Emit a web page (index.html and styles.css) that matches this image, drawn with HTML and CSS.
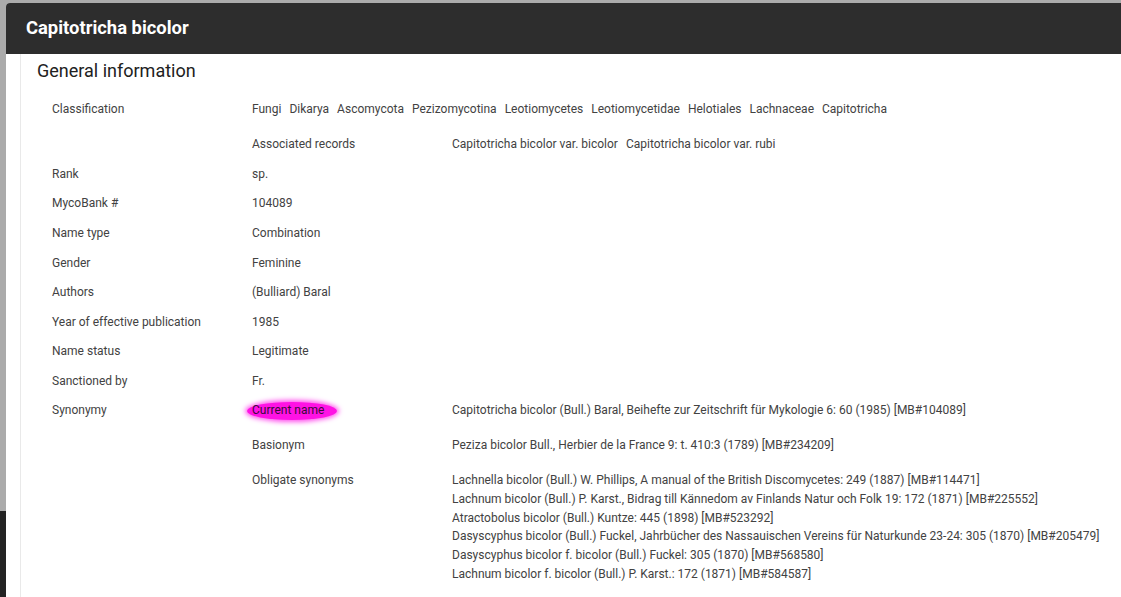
FILE: index.html
```html
<!DOCTYPE html>
<html lang="en">
<head>
  <meta charset="UTF-8">
  <meta name="viewport" content="width=device-width, initial-scale=1.0">
  <title>Capitotricha bicolor</title>
  <link rel="stylesheet" href="styles.css">
</head>
<body>
  <div class="dialog">
    <!-- Dialog header -->
    <div class="dialog-header">Capitotricha bicolor</div>

    <div class="dialog-body">
      <h2 class="section-title">General information</h2>

      <div class="info-table">
        <div class="row">
          <div class="label">Classification</div>
          <div class="value">
            <div class="chips">
              <span>Fungi</span><span>Dikarya</span><span>Ascomycota</span><span>Pezizomycotina</span><span>Leotiomycetes</span><span>Leotiomycetidae</span><span>Helotiales</span><span>Lachnaceae</span><span>Capitotricha</span>
            </div>
            <div class="sub-row">
              <div class="label">Associated records</div>
              <div class="chips">
                <span>Capitotricha bicolor var. bicolor</span><span>Capitotricha bicolor var. rubi</span>
              </div>
            </div>
          </div>
        </div>

        <div class="row"><div class="label">Rank</div><div class="value">sp.</div></div>
        <div class="row"><div class="label">MycoBank #</div><div class="value">104089</div></div>
        <div class="row"><div class="label">Name type</div><div class="value">Combination</div></div>
        <div class="row"><div class="label">Gender</div><div class="value">Feminine</div></div>
        <div class="row"><div class="label">Authors</div><div class="value">(Bulliard) Baral</div></div>
        <div class="row"><div class="label">Year of effective publication</div><div class="value">1985</div></div>
        <div class="row"><div class="label">Name status</div><div class="value">Legitimate</div></div>
        <div class="row"><div class="label">Sanctioned by</div><div class="value">Fr.</div></div>

        <div class="row">
          <div class="label">Synonymy</div>
          <div class="value">
            <div class="sub-row">
              <div class="label"><span class="highlight">Current name</span></div>
              <div>Capitotricha bicolor (Bull.) Baral, Beihefte zur Zeitschrift für Mykologie 6: 60 (1985) [MB#104089]</div>
            </div>
            <div class="sub-row">
              <div class="label">Basionym</div>
              <div>Peziza bicolor Bull., Herbier de la France 9: t. 410:3 (1789) [MB#234209]</div>
            </div>
            <div class="sub-row">
              <div class="label">Obligate synonyms</div>
              <div>
                <div>Lachnella bicolor (Bull.) W. Phillips, A manual of the British Discomycetes: 249 (1887) [MB#114471]</div>
                <div>Lachnum bicolor (Bull.) P. Karst., Bidrag till Kännedom av Finlands Natur och Folk 19: 172 (1871) [MB#225552]</div>
                <div>Atractobolus bicolor (Bull.) Kuntze: 445 (1898) [MB#523292]</div>
                <div>Dasyscyphus bicolor (Bull.) Fuckel, Jahrbücher des Nassauischen Vereins für Naturkunde 23-24: 305 (1870) [MB#205479]</div>
                <div>Dasyscyphus bicolor f. bicolor (Bull.) Fuckel: 305 (1870) [MB#568580]</div>
                <div>Lachnum bicolor f. bicolor (Bull.) P. Karst.: 172 (1871) [MB#584587]</div>
              </div>
            </div>
          </div>
        </div>
      </div>
    </div>
  </div>
</body>
</html>
```

FILE: styles.css
```css
html, body {
  height: 100%;
}

body {
  margin: 0;
  overflow: hidden;
  font-family: Roboto, "Liberation Sans", Arial, sans-serif;
  /* backdrop behind the dialog: grey page, dark strip lower down */
  background: linear-gradient(to bottom, #ababab 0, #ababab 511px, #232323 511px);
}

/* Dialog */
.dialog {
  margin: 3px 0 0 6px;
  height: calc(100% - 3px);
  background: #fff;
  border-radius: 4px 0 0 0;
  overflow: hidden;
}

.dialog-header {
  height: 51px;
  background-color: #2d2d2d;
  color: #fff;
  font-size: 18.4px;
  font-weight: bold;
  padding-left: 20px;
  display: flex;
  align-items: center;
  padding-bottom: 2px;
  box-sizing: border-box;
}

.dialog-body {
  margin-left: 14px;
  border-left: 1px solid #e9e9e9;
  padding-left: 16px;
  height: 100%;
}

.section-title {
  margin: 0;
  padding-top: 5px;
  font-size: 18px;
  font-weight: normal;
  line-height: 24px;
  color: #212121;
}

/* Info table */
.info-table {
  margin-top: 12px;
  padding-left: 15px;
  font-size: 12px;
  line-height: 18.8px;
  color: #424242;
}

.row {
  display: grid;
  grid-template-columns: 200px 1fr;
  padding: 5.4px 0;
}

.value {
  display: flex;
  flex-direction: column;
  gap: 16px;
}

.sub-row {
  display: grid;
  grid-template-columns: 200px 1fr;
}

.chips {
  display: flex;
  flex-wrap: wrap;
  gap: 0 8px;
}

/* Marker highlight around "Current name" */
.highlight {
  position: relative;
  z-index: 0;
  color: #3b0b3a;
}

.highlight::before {
  content: "";
  position: absolute;
  left: -5px;
  right: -13px;
  top: -1px;
  bottom: -3px;
  background: #ff12e4;
  border-radius: 50%;
  box-shadow: 0 0 5px 2px #ff50ee;
  z-index: -1;
}
```
